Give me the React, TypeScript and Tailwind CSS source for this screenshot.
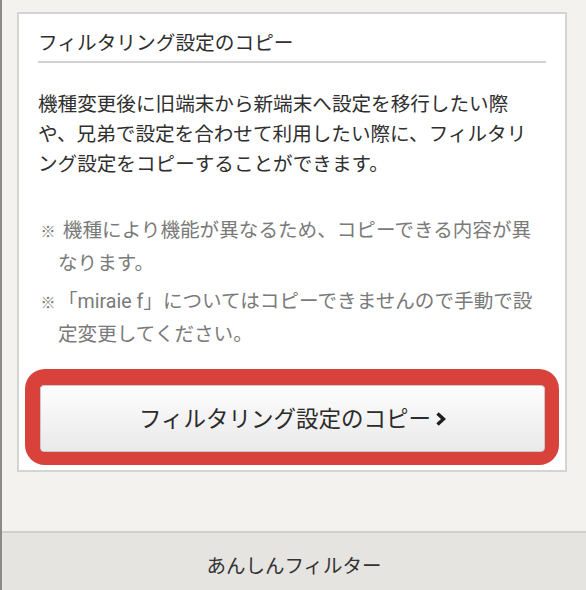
import { useState } from 'react';

const notes = [
  ' 機種により機能が異なるため、コピーできる内容が異なります。',
  '「miraie f」についてはコピーできませんので手動で設定変更してください。',
];

function Chevron() {
  return (
    <svg width="11" height="14" viewBox="0 0 11 14" className="shrink-0">
      <polyline points="2.5,1.5 8.5,7 2.5,12.5" fill="none" stroke="#1f1f1f" strokeWidth="3.4" strokeLinejoin="miter" />
    </svg>
  );
}

export default function App() {
  const [copied, setCopied] = useState(false);

  return (
    <div className="w-[586px] h-[590px] flex flex-col overflow-hidden bg-[#f3f2ef] border-l-2 border-[#8a8a8a] font-['Roboto','Noto_Sans_CJK_JP',sans-serif] text-[#333]">
      <main className="flex-1 pt-[12px] pl-[15px] pr-[19px]">
        <section className="bg-white border-2 border-[#d4d4d2] px-[19px] pt-[16px] pb-[5px]">
          <h2 className="text-[19.7px] leading-[28px] pb-[3px] border-b-2 border-[#d2d2d2] text-[#2f2f2f]">
            フィルタリング設定のコピー
          </h2>
          <p className="mt-[27px] pr-[8px] text-[19.6px] leading-[30px] text-[#2f2f2f]">
            機種変更後に旧端末から新端末へ設定を移行したい際や、兄弟で設定を合わせて利用したい際に、フィルタリング設定をコピーすることができます。
          </p>
          <ul className="mt-[35px] flex flex-col gap-[6px]">
            {notes.map((n) => (
              <li key={n} className="pl-[20px] -indent-[20px] text-[19.6px] leading-[32px] text-[#7a7a7a]">
                <span className="inline-block w-[20px] indent-0 text-center text-[15px]">※</span>
                {n}
              </li>
            ))}
          </ul>
          <div className="mt-[18px] -mx-[13px] rounded-[20px] border-[#d9423a] border-l-[15px] border-r-[14px] border-t-[16px] border-b-[13px]">
            <button
              onClick={() => setCopied(!copied)}
              className="w-full h-[67px] flex items-center justify-center gap-[4px] rounded-[4px] border border-[#c9c9c9] bg-gradient-to-b from-[#fefefe] to-[#e9e9e9] text-[22.5px] leading-[30px] text-[#2b2b2b]"
            >
              フィルタリング設定のコピー
              <Chevron />
            </button>
          </div>
        </section>
      </main>
      <footer className="h-[59px] shrink-0 flex justify-center pt-[20px] bg-[#e5e4e1] border-t-2 border-[#cfcfcc]">
        <span className="text-[19.5px] leading-[28px] text-[#333]">あんしんフィルター</span>
      </footer>
    </div>
  );
}
